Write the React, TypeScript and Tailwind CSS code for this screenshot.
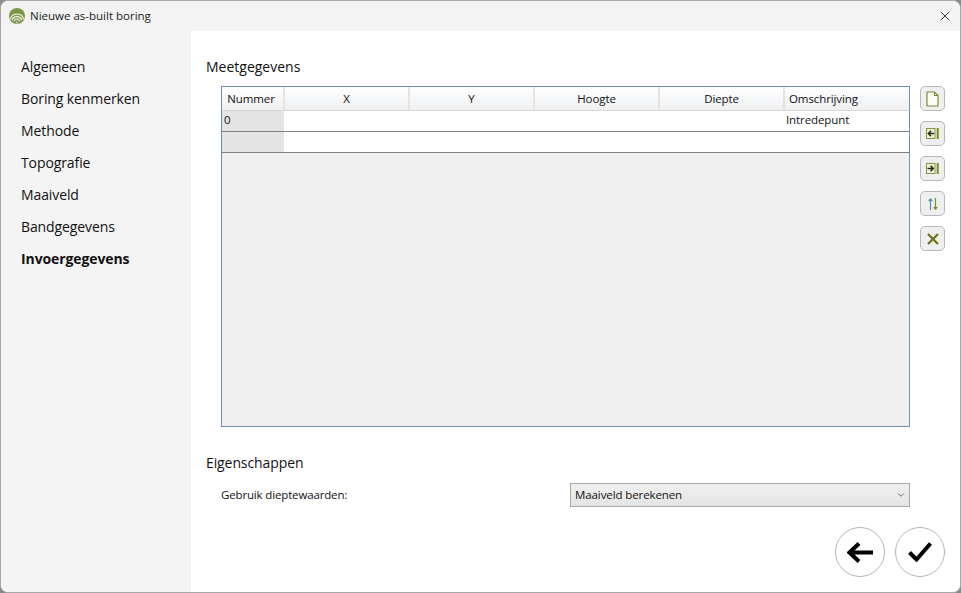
import { X, ChevronDown } from "lucide-react";

const navItems = [
  "Algemeen",
  "Boring kenmerken",
  "Methode",
  "Topografie",
  "Maaiveld",
  "Bandgegevens",
  "Invoergegevens",
];

const columns = ["X", "Y", "Hoogte", "Diepte"];

const cells = ["c1", "c2", "c3", "c4"];

const AppIcon = () => (
  <svg width="16" height="16" viewBox="0 0 16 16" fill="none">
    <circle cx="8" cy="8" r="8" fill="#7d9645" />
    <path d="M1.2 11a7.2 7.2 0 0 1 13.6 0" stroke="#e6edd2" strokeWidth="1.2" />
    <path d="M3 12a5.4 5.4 0 0 1 10 0" stroke="#f2f5e8" strokeWidth="1.2" />
    <path d="M4.7 13a3.6 3.6 0 0 1 6.6 0" stroke="#e2e2e2" strokeWidth="1.2" />
    <path d="M6.3 13.8a1.9 1.9 0 0 1 3.4 0" stroke="#a0a0a0" strokeWidth="1.2" />
    <circle cx="8" cy="14.8" r="1" fill="#c4c4c4" />
  </svg>
);

const NewIcon = () => (
  <svg width="13" height="16" viewBox="0 0 13 16" fill="none">
    <path d="M1 1h7.5L12 4.5V15H1z" fill="#fdfdf5" stroke="#7d8a3a" strokeWidth="1.2" />
    <path d="M8.5 1v3.5H12" stroke="#7d8a3a" strokeWidth="1.2" />
  </svg>
);

const InsertBeforeIcon = () => (
  <svg width="13" height="11" viewBox="0 0 13 11" fill="none">
    <rect x="0.5" y="0.5" width="8.5" height="10" fill="#eef0dc" stroke="#8a9440" />
    <path d="M2.2 5.5h6M5 2.8 2.4 5.5 5 8.2" stroke="#26300c" strokeWidth="1.6" />
    <path d="M11.7 0v11" stroke="#6f8f1c" strokeWidth="2" />
  </svg>
);

const InsertAfterIcon = () => (
  <svg width="13" height="11" viewBox="0 0 13 11" fill="none">
    <rect x="0.5" y="0.5" width="8.5" height="10" fill="#eef0dc" stroke="#8a9440" />
    <path d="M1.5 5.5h6M4.6 2.8 7.2 5.5 4.6 8.2" stroke="#26300c" strokeWidth="1.6" />
    <path d="M11.7 0v11" stroke="#6f8f1c" strokeWidth="2" />
  </svg>
);

const SortIcon = () => (
  <svg width="10" height="12" viewBox="0 0 10 12" fill="none">
    <path d="M2.5 12V1M0.7 3l1.8-2 1.8 2" stroke="#4f8fa8" strokeWidth="1.2" />
    <path d="M7.5 0v11M5.7 9l1.8 2 1.8-2" stroke="#7d8a2c" strokeWidth="1.2" />
  </svg>
);

const DeleteIcon = () => (
  <svg width="12" height="12" viewBox="0 0 12 12" fill="none">
    <path d="M1 1l10 10M11 1 1 11" stroke="#6f6f14" strokeWidth="2.2" />
  </svg>
);

const BackIcon = () => (
  <svg width="26" height="21" viewBox="0 0 26 21" fill="none">
    <path d="M3 10.5h23M12 1.5l-9.5 9 9.5 9" stroke="#000" strokeWidth="4" />
  </svg>
);

const ConfirmIcon = () => (
  <svg width="24" height="20" viewBox="0 0 24 20" fill="none">
    <path d="M1.5 10.5l7 7L22.5 1.5" stroke="#000" strokeWidth="4" />
  </svg>
);

const tools = [NewIcon, InsertBeforeIcon, InsertAfterIcon, SortIcon, DeleteIcon];

const App = () => {
  return (
    <div className="w-[961px] h-[593px] bg-[#8a8a8a] overflow-hidden font-['Open_Sans','Noto_Sans',sans-serif] text-[#111]">
      <div className="w-full h-full flex flex-col rounded-lg overflow-hidden border border-[#a8a8a8] bg-white">
        <div className="h-[30px] shrink-0 bg-[#f3f3f3] flex items-center pl-[8px] pr-[7px]">
          <AppIcon />
          <span className="ml-[5px] text-[11.5px] text-[#1a1a1a]">Nieuwe as-built boring</span>
          <X className="ml-auto w-[16px] h-[16px] text-[#222]" strokeWidth={1.3} />
        </div>

        <div className="flex-1 flex min-h-0">
          <nav className="w-[190px] shrink-0 bg-[#f4f4f4] pt-[19px] pl-[20px] flex flex-col">
            {navItems.map((item) => (
              <div
                key={item}
                className={`h-[32px] flex items-center text-[14px] tracking-[-0.1px] ${item === "Invoergegevens" ? "font-bold" : ""}`}
              >
                {item}
              </div>
            ))}
          </nav>

          <main className="flex-1 flex flex-col pl-[15px] pr-[15px] pt-[25px]">
            <h2 className="h-[22px] leading-[22px] text-[14px] tracking-[0px]">Meetgegevens</h2>

            <div className="flex mt-[8px] pl-[15px]">
              <div className="w-[689px] h-[341px] border border-[#6b8fb5] bg-[#efefef] flex flex-col text-[11.5px] tracking-[-0.1px]">
                <div className="h-[24px] flex bg-gradient-to-b from-white to-[#eef0f2] border-b border-[#d6d6d6]">
                  <div className="w-[63px] pr-[3px] border-r-2 border-[#e4e4e4] flex items-center justify-center">Nummer</div>
                  {columns.map((col) => (
                    <div key={col} className="w-[125px] border-r-2 border-[#e4e4e4] flex items-center justify-center">
                      {col}
                    </div>
                  ))}
                  <div className="flex-1 flex items-center pl-[4px]">Omschrijving</div>
                </div>

                <div className="h-[21px] flex bg-white border-b border-[#808080] pb-[2px]">
                  <div className="w-[62px] -mb-[2px] bg-[#e4e4e4] pl-[2px] pb-[2px] flex items-center">0</div>
                  {cells.map((c) => (
                    <div key={c} className="w-[125px]" />
                  ))}
                  <div className="flex-1 pl-[2px] flex items-center">Intredepunt</div>
                </div>

                <div className="h-[21px] flex bg-white border-b border-[#808080]">
                  <div className="w-[62px] bg-[#e4e4e4]" />
                </div>
              </div>

              <div className="ml-[10px] flex flex-col gap-[10px]">
                {tools.map((Tool, i) => (
                  <button
                    key={i}
                    className="w-[25px] h-[25px] rounded-[5px] border border-[#b8b8b8] bg-[#efefef] flex items-center justify-center"
                  >
                    <Tool />
                  </button>
                ))}
              </div>
            </div>

            <h2 className="mt-[25px] h-[22px] leading-[22px] text-[14px] tracking-[-0.1px]">Eigenschappen</h2>

            <div className="mt-[9px] pl-[15px] w-[704px] flex items-center justify-between">
              <span className="text-[11.5px] tracking-[-0.15px]">Gebruik dieptewaarden:</span>
              <div className="w-[340px] h-[24px] border border-[#a9a9a9] bg-gradient-to-b from-[#f0f0f0] to-[#e4e4e4] flex items-center pl-[4px] pr-[3px] text-[11.5px] tracking-[-0.1px]">
                Maaiveld berekenen
                <ChevronDown className="ml-auto w-[10px] h-[10px] text-[#666]" strokeWidth={2.2} />
              </div>
            </div>

            <div className="mt-[20px] flex justify-end gap-[10px]">
              <button className="w-[50px] h-[50px] rounded-full border border-[#b5b5b5] bg-white flex items-center justify-center">
                <BackIcon />
              </button>
              <button className="w-[50px] h-[50px] rounded-full border border-[#b5b5b5] bg-white flex items-center justify-center">
                <ConfirmIcon />
              </button>
            </div>
          </main>
        </div>
      </div>
    </div>
  );
};

export default App;
